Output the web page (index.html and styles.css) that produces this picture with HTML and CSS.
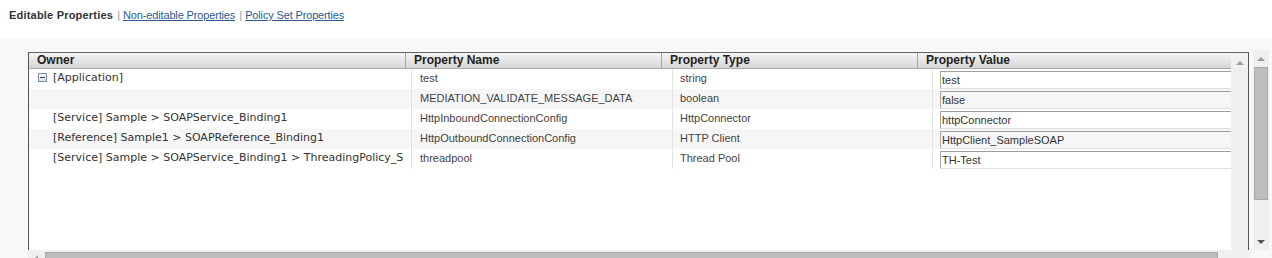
FILE: index.html
```html
<!DOCTYPE html>
<html lang="en">
<head>
  <meta charset="UTF-8">
  <title>Properties</title>
  <link rel="stylesheet" href="styles.css">
</head>
<body>
  <div class="tabs">
    <span class="current">Editable Properties</span>
    <span class="sep">|</span>
    <a href="#">Non-editable Properties</a>
    <span class="sep">|</span>
    <a href="#">Policy Set Properties</a>
  </div>

  <div class="panel">
    <div class="grid">
      <div class="grid-main">
        <div class="grid-view">
          <div class="grid-header">
            <div class="hcell">Owner</div>
            <div class="hcell">Property Name</div>
            <div class="hcell">Property Type</div>
            <div class="hcell">Property Value</div>
          </div>

          <div class="grid-body">
            <div class="row">
              <div class="cell owner"><span class="expander"></span>[Application]</div>
              <div class="cell">test</div>
              <div class="cell">string</div>
              <div class="cell value"><input type="text" value="test"></div>
            </div>
            <div class="row odd">
              <div class="cell owner"></div>
              <div class="cell">MEDIATION_VALIDATE_MESSAGE_DATA</div>
              <div class="cell">boolean</div>
              <div class="cell value"><input type="text" value="false"></div>
            </div>
            <div class="row">
              <div class="cell owner">[Service] Sample &gt; SOAPService_Binding1</div>
              <div class="cell">HttpInboundConnectionConfig</div>
              <div class="cell">HttpConnector</div>
              <div class="cell value"><input type="text" value="httpConnector"></div>
            </div>
            <div class="row odd">
              <div class="cell owner">[Reference] Sample1 &gt; SOAPReference_Binding1</div>
              <div class="cell">HttpOutboundConnectionConfig</div>
              <div class="cell">HTTP Client</div>
              <div class="cell value"><input type="text" value="HttpClient_SampleSOAP"></div>
            </div>
            <div class="row">
              <div class="cell owner">[Service] Sample &gt; SOAPService_Binding1 &gt; ThreadingPolicy_S</div>
              <div class="cell">threadpool</div>
              <div class="cell">Thread Pool</div>
              <div class="cell value"><input type="text" value="TH-Test"></div>
            </div>
          </div>
        </div>

        <div class="inner-scroll">
          <span class="arrow up"></span>
        </div>
      </div>

      <div class="hscroll">
        <div class="hbtn"><span class="arrow left"></span></div>
        <div class="hthumb"></div>
        <div class="hbtn right"><span class="arrow right"></span></div>
      </div>
    </div>

    <div class="vscroll">
      <div class="vbtn"><span class="arrow up"></span></div>
      <div class="vthumb"></div>
      <div class="vtrack"></div>
      <div class="vbtn"><span class="arrow down"></span></div>
    </div>
  </div>
</body>
</html>
```

FILE: styles.css
```css
html, body {
  margin: 0;
  padding: 0;
  height: 258px;
  overflow: hidden;
  background: white;
}

body {
  font-family: "Liberation Sans", Arial, sans-serif;
  font-size: 11px;
  color: #333;
}

/* top links */
.tabs {
  height: 38px;
  padding: 9px 0 0 9px;
  box-sizing: border-box;
  line-height: 13px;
}

.tabs .current {
  font-weight: bold;
  color: #333;
  letter-spacing: 0.2px;
}

.tabs .sep {
  color: #999;
  margin: 0 0 0 1px;
}

.tabs a {
  color: #2a5a94;
  text-decoration: underline;
  letter-spacing: -0.15px;
}

/* grid panel */
.panel {
  display: flex;
  align-items: flex-start;
  gap: 3px;
  padding: 12px 0 0 28px;
  background: #f8f8f8;
  height: 240px;
}

.grid {
  width: 1222px;
  margin-top: 2px;
}

.grid-main {
  display: flex;
  height: 198px;
  box-sizing: border-box;
  border-top: 1px solid #666;
  border-left: 1px solid #555;
  border-right: 1px solid #555;
  background: white;
  margin-right: -1px;
  width: 1221px;
}

.grid-view {
  width: 1202px;
  overflow: hidden;
}

.grid-header {
  display: grid;
  grid-template-columns: 376px 256px 256px 314px;
  height: 15px;
  border-bottom: 1px solid #a8a8a8;
  background: linear-gradient(#f4f4f4, #e2e2e2 60%, #d6d6d6);
}

.hcell {
  font-weight: bold;
  font-size: 12px;
  color: #222;
  line-height: 15px;
  padding-left: 8px;
  white-space: nowrap;
}

.hcell + .hcell {
  border-left: 1px solid #a4a4a4;
  padding-left: 8px;
}

.row {
  display: grid;
  grid-template-columns: 382px 261px 260px 299px;
  height: 20px;
}

.row.odd {
  background: #f6f6f6;
}

.cell {
  line-height: 18px;
  padding-left: 8px;
  white-space: nowrap;
  overflow: hidden;
  color: #444;
}

.cell + .cell {
  border-left: 1px solid #e2e2e2;
}

.cell:nth-child(3) {
  padding-left: 7px;
}

.cell.owner {
  font-family: "DejaVu Sans", Verdana, sans-serif;
  color: #333;
  padding-left: 24px;
  position: relative;
}

.expander {
  position: absolute;
  left: 9px;
  top: 4px;
  width: 7px;
  height: 7px;
  border: 1px solid #7b8ea8;
  background: linear-gradient(#fdfdfd, #d9e0ea);
}

.expander::after {
  content: "";
  position: absolute;
  left: 1px;
  top: 3px;
  width: 5px;
  height: 1px;
  background: #2b3e5c;
}

.cell.value {
  padding-left: 7px;
}

.cell.value input {
  display: block;
  box-sizing: border-box;
  width: 320px;
  height: 18px;
  margin: 2px 0 0 0;
  padding: 0 0 0 1px;
  border: 1px solid #e0e0e0;
  border-top-color: #a0a0a0;
  border-left-color: #a8a8a8;
  background: transparent;
  font-family: "Liberation Sans", Arial, sans-serif;
  font-size: 11px;
  color: #333;
}

/* scrollbars */
.arrow {
  display: block;
  width: 0;
  height: 0;
  border: 4px solid transparent;
}

.arrow.up {
  border-bottom-color: #9a9a9a;
  border-top-width: 0;
}

.arrow.down {
  border-top-color: #555;
  border-bottom-width: 0;
}

.arrow.left {
  border-right-color: #9a9a9a;
  border-left-width: 0;
}

.arrow.right {
  border-left-color: #444;
  border-right-width: 0;
}

.inner-scroll {
  width: 17px;
  background: #f0f0f0;
  display: flex;
  justify-content: center;
  padding-top: 8px;
  box-sizing: border-box;
}

.hscroll {
  display: flex;
  height: 17px;
  width: 1222px;
  background: #f0f0f0;
}

.hbtn {
  width: 17px;
  display: flex;
  align-items: center;
  padding-left: 6px;
  box-sizing: border-box;
}

.hbtn.right {
  margin-left: auto;
  width: 32px;
  padding-left: 18px;
  padding-top: 10px;
}

.hthumb {
  width: 1171px;
  margin-top: 2px;
  background: #bdbdbd;
  border: 1px solid #ababab;
}

.vscroll {
  width: 16px;
  height: 200px;
  background: #f0f0f0;
  display: flex;
  flex-direction: column;
  align-items: center;
}

.vbtn {
  height: 17px;
  display: flex;
  align-items: center;
  justify-content: center;
}

.vthumb {
  width: 12px;
  height: 131px;
  background: #bdbdbd;
  border: 1px solid #a9a9a9;
}

.vtrack {
  flex: 1;
}
```
